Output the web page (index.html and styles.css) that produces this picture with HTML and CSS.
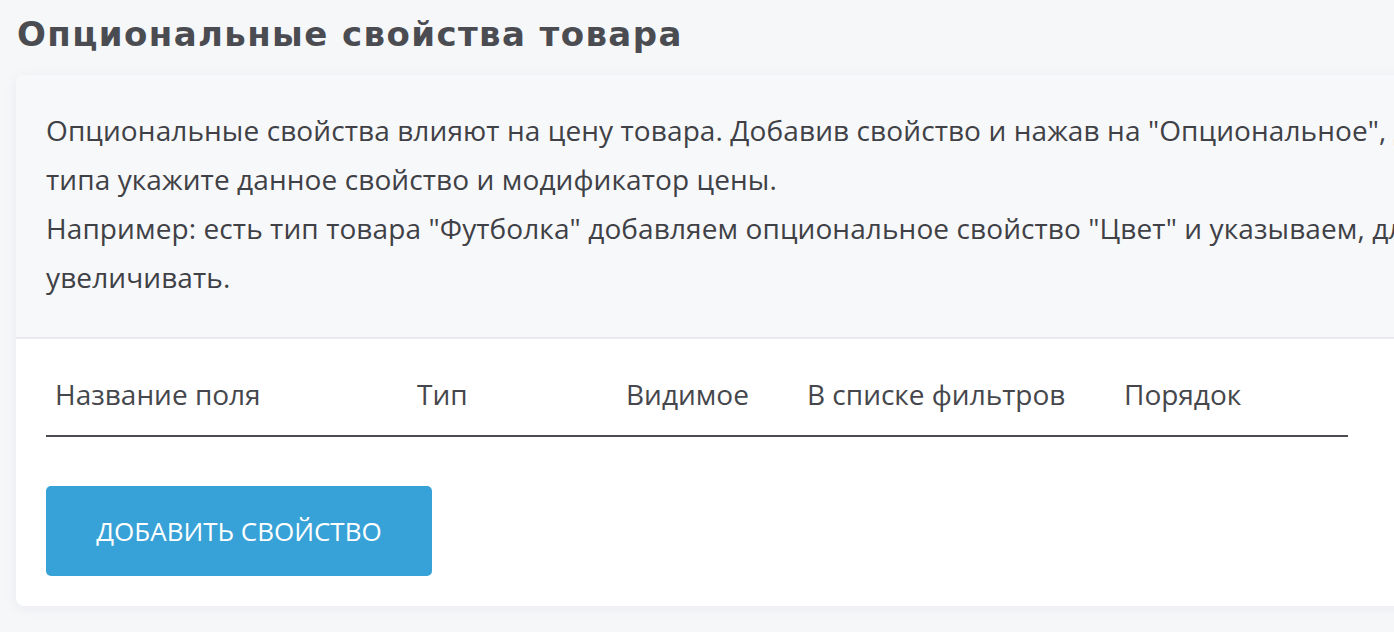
FILE: index.html
```html
<!DOCTYPE html>
<html lang="ru">
<head>
<meta charset="utf-8">
<title>Опциональные свойства товара</title>
<link rel="stylesheet" href="styles.css">
</head>
<body>
<div class="page">
  <h1 class="title">Опциональные свойства товара</h1>
  <div class="card">
    <div class="card-info">
      <p class="info-line">Опциональные свойства влияют на цену товара. Добавив свойство и нажав на "Опциональное", для каждого товара этого<br>типа укажите данное свойство и модификатор цены.</p>
      <p class="info-line">Например: есть тип товара "Футболка" добавляем опциональное свойство "Цвет" и указываем, для какого цвета цена будет<br>увеличивать.</p>
    </div>
    <div class="card-body">
      <div class="table-head">
        <div class="th col-name">Название поля</div>
        <div class="th col-type">Тип</div>
        <div class="th col-visible">Видимое</div>
        <div class="th col-filter">В списке фильтров</div>
        <div class="th col-order">Порядок</div>
      </div>
      <button class="btn-add" type="button">ДОБАВИТЬ СВОЙСТВО</button>
    </div>
  </div>
</div>
</body>
</html>
```

FILE: styles.css
```css
html, body {
  margin: 0;
  padding: 0;
}
body {
  background: #f6f7f9;
  overflow: hidden;
  width: 1394px;
  height: 632px;
  font-family: "Open Sans", "Liberation Sans", sans-serif;
  color: #3f4146;
}
.page {
  padding: 0 0 0 16px;
}
.title {
  margin: 0;
  height: 75px;
  box-sizing: border-box;
  padding: 12px 0 0 1px;
  font-family: "DejaVu Sans", "Inter", sans-serif;
  font-weight: 700;
  font-size: 34px;
  line-height: 44px;
  color: #4a4c52;
  letter-spacing: 1.4px;
  white-space: nowrap;
}
.card {
  width: 1560px;
  border-radius: 8px;
  background: #ffffff;
  box-shadow: 0 2px 14px rgba(30, 40, 60, 0.06);
  overflow: hidden;
}
.card-info {
  background: #f7f8fa;
  padding: 31px 30px 35px 30px;
  border-bottom: 2px solid #e9eaed;
}
.info-line {
  margin: 0;
  font-size: 28px;
  line-height: 49px;
  letter-spacing: 0.1px;
  white-space: nowrap;
}
.card-body {
  padding: 0 30px 30px 30px;
}
.table-head {
  display: flex;
  width: 1302px;
  border-bottom: 2px solid #4a4c52;
  padding: 37px 0 23px 0;
}
.th {
  box-sizing: border-box;
  padding-left: 9px;
  font-size: 28px;
  line-height: 36px;
  color: #45474c;
  white-space: nowrap;
}
.col-name { width: 362px; }
.col-type { width: 209px; }
.col-visible { width: 181px; }
.col-filter { width: 317px; }
.col-order { width: 233px; }
.btn-add {
  display: block;
  margin-top: 49px;
  width: 386px;
  height: 90px;
  border: 0;
  border-radius: 5px;
  background: #37a2d7;
  color: #ffffff;
  font-family: "Open Sans", "Liberation Sans", sans-serif;
  font-size: 26px;
  line-height: 90px;
  padding: 0;
  cursor: pointer;
}
```
